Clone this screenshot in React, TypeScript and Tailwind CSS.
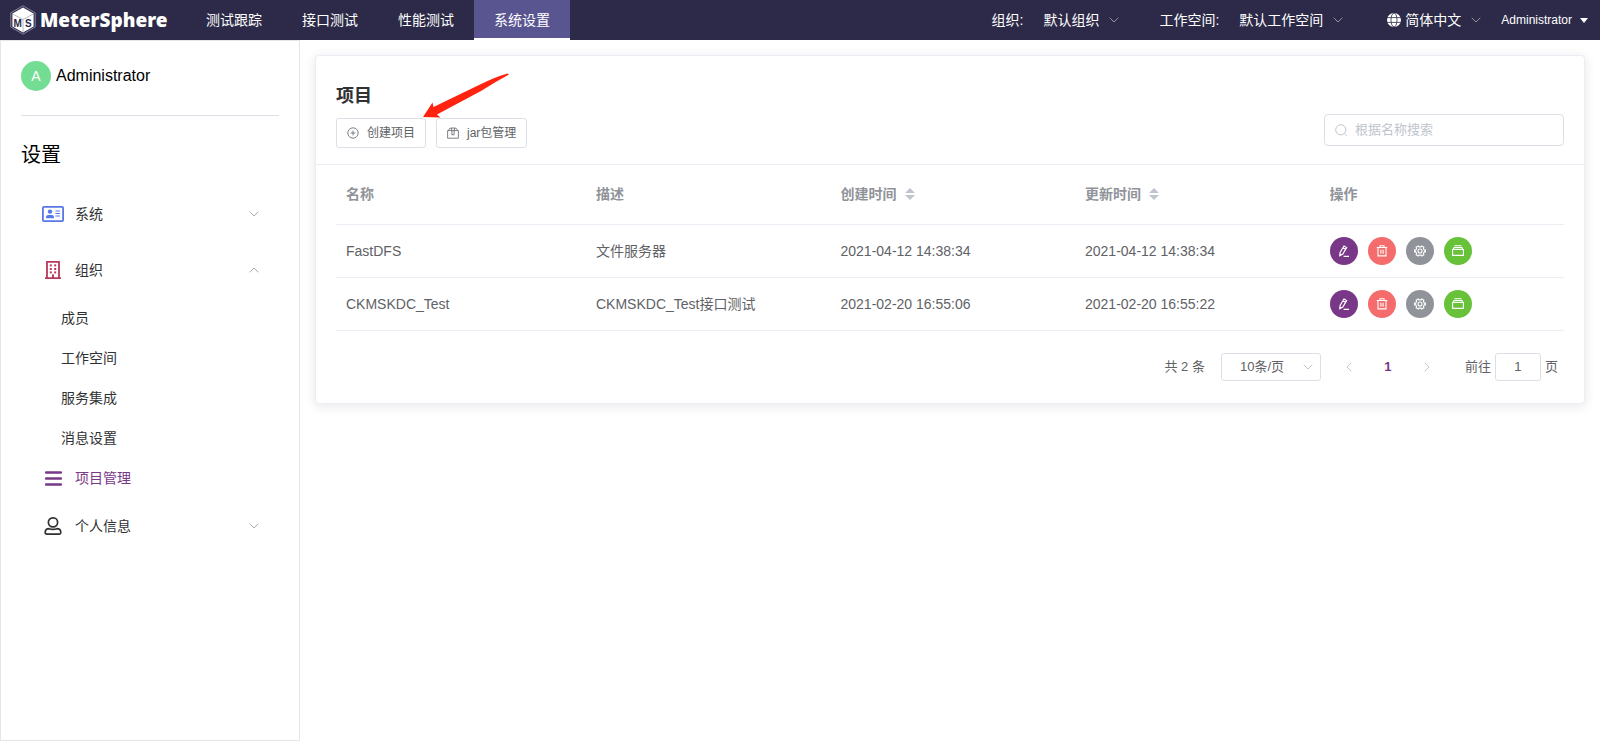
import React, { useState } from "react";

interface Project {
  id: number;
  name: string;
  description: string;
  createTime: string;
  updateTime: string;
}

interface IconProps {
  className?: string;
}

const projects: Project[] = [
  {
    id: 1,
    name: "FastDFS",
    description: "文件服务器",
    createTime: "2021-04-12 14:38:34",
    updateTime: "2021-04-12 14:38:34",
  },
  {
    id: 2,
    name: "CKMSKDC_Test",
    description: "CKMSKDC_Test接口测试",
    createTime: "2021-02-20 16:55:06",
    updateTime: "2021-02-20 16:55:22",
  },
];

const navItems = ["测试跟踪", "接口测试", "性能测试", "系统设置"];
const orgItems = ["成员", "工作空间", "服务集成", "消息设置"];

const Chevron: React.FC<IconProps> = ({ className }) => (
  <svg viewBox="0 0 10 6" className={className} fill="none" stroke="currentColor" aria-hidden="true">
    <path d="M0.7 0.7 L5 5 L9.3 0.7" />
  </svg>
);

const LogoMark = () => (
  <svg viewBox="0 0 26 30" className="h-[30px] w-[26px]" aria-hidden="true">
    <path d="M13 0.8 L25.2 7.8 V22 L13 29.2 L0.8 22 V7.8 Z" fill="none" stroke="#8f8da4" strokeWidth="0.9" />
    <path d="M13 2.4 L23.6 8.4 V21.4 L13 27.6 L2.4 21.4 V8.4 Z" fill="#fff" />
    <path d="M2.4 8.8 L13 14.6 L23.6 8.8 M13 14.6 V27.6" fill="none" stroke="#9b99ae" strokeWidth="0.7" />
    <g fill="#2c2a48" fontFamily="Liberation Sans, sans-serif" fontSize="10" fontWeight="bold">
      <text x="3.4" y="21.6">M</text>
      <text x="15" y="22">S</text>
    </g>
  </svg>
);

const GlobeIcon = () => (
  <svg viewBox="0 0 14 14" className="size-3.5" aria-hidden="true">
    <circle cx="7" cy="7" r="7" fill="#fff" />
    <g fill="none" stroke="#2c2a48" strokeWidth="0.8">
      <ellipse cx="7" cy="7" rx="3" ry="7" />
      <path d="M0 4.6 H14 M0 9.4 H14" />
    </g>
  </svg>
);

const CardIcon = () => (
  <svg viewBox="0 0 22 16" className="h-4 w-[22px] text-[#5878e8]" aria-hidden="true">
    <rect x="0.9" y="0.9" width="20.2" height="14.2" rx="1" fill="none" stroke="currentColor" strokeWidth="1.8" />
    <circle cx="8" cy="5.6" r="2.2" fill="currentColor" />
    <path d="M4 12.2 V11 Q4 8.9 6.2 8.9 H9.8 Q12 8.9 12 11 V12.2 Z" fill="currentColor" />
    <path d="M13.4 5 H18 M13.4 7.5 H18 M13.4 10 H18" stroke="currentColor" strokeWidth="1" />
  </svg>
);

const BuildingIcon = () => (
  <svg viewBox="0 0 16 18" className="h-[18px] w-4 text-[#b8395a]" aria-hidden="true">
    <path d="M2 17 V0.9 H14 V17 M0 17.1 H16" fill="none" stroke="currentColor" strokeWidth="1.8" />
    <g fill="currentColor">
      <rect x="4.8" y="3.4" width="2" height="2" />
      <rect x="9.2" y="3.4" width="2" height="2" />
      <rect x="4.8" y="7" width="2" height="2" />
      <rect x="9.2" y="7" width="2" height="2" />
      <rect x="4.8" y="10.4" width="2" height="2" />
      <rect x="9.2" y="10.4" width="2" height="2" />
      <rect x="7" y="13.4" width="2" height="4" />
    </g>
  </svg>
);

const BarsIcon = () => (
  <svg viewBox="0 0 17 15" className="h-[15px] w-[17px]" aria-hidden="true">
    <path d="M1 1.5 H16 M1 7.5 H16 M1 13.5 H16" stroke="#783887" strokeWidth="2.3" strokeLinecap="round" />
  </svg>
);

const UserIcon = () => (
  <svg viewBox="0 0 18 18" className="size-[18px]" fill="none" stroke="#303133" strokeWidth="1.7" aria-hidden="true">
    <rect x="4.4" y="0.9" width="9.2" height="9" rx="4.3" />
    <path d="M1.2 15.6 Q1.2 11.7 5 11.7 Q9 12.9 13 11.7 Q16.8 11.7 16.8 15.6 Q16.8 17.1 15.4 17.1 H2.6 Q1.2 17.1 1.2 15.6 Z" />
  </svg>
);

const PlusCircleIcon = () => (
  <svg viewBox="0 0 12 12" className="size-3" fill="none" stroke="currentColor" strokeWidth="0.8" aria-hidden="true">
    <circle cx="6" cy="6" r="5.2" />
    <path d="M6 3.6 V8.4 M3.6 6 H8.4" />
  </svg>
);

const BoxIcon = () => (
  <svg viewBox="0 0 12 12" className="size-3" fill="none" stroke="currentColor" strokeWidth="0.8" aria-hidden="true">
    <path d="M0.6 3.6 H11.4 V11.2 H0.6 Z M1.4 3.6 Q2.2 1 4 1 H8 Q9.8 1 10.6 3.6 M4.6 1 V3.6 M7.4 1 V3.6 M4.9 3.6 V7.8 H7.1 V3.6" />
  </svg>
);

const SearchIcon = () => (
  <svg viewBox="0 0 12 12" className="size-3" fill="none" stroke="#c0c4cc" strokeWidth="1" aria-hidden="true">
    <circle cx="5.8" cy="5.8" r="5.1" />
    <path d="M9.4 9.4 L11.6 11.6" />
  </svg>
);

const EditIcon = () => (
  <svg viewBox="0 0 12 12" className="size-3" fill="none" stroke="currentColor" strokeWidth="1.2" aria-hidden="true">
    <path d="M6 1 L8.6 2.6 L4.8 9 L1.8 10.6 L2.1 7.5 Z M5 2.8 L7.6 4.4 M5.6 11.3 H11" />
  </svg>
);

const DeleteIcon = () => (
  <svg viewBox="0 0 12 12" className="size-3" fill="none" stroke="currentColor" strokeWidth="1.1" aria-hidden="true">
    <path d="M0.8 2.5 H11.2 M4 2.5 V0.8 H8 V2.5 M2 2.5 V10.9 H10 V2.5 M4.9 4.8 V8.8 M7.1 4.8 V8.8" />
  </svg>
);

const SettingIcon = () => (
  <svg viewBox="0 0 12 12" className="size-3" fill="none" stroke="currentColor" strokeWidth="1.1" aria-hidden="true">
    <path d="M4.2 0.9 L4.9 1.9 H7.1 L7.8 0.9 L9.9 2.2 L9.4 3.4 L10.3 5.1 H11.4 V6.9 H10.3 L9.4 8.6 L9.9 9.8 L7.8 11.1 L7.1 10.1 H4.9 L4.2 11.1 L2.1 9.8 L2.6 8.6 L1.7 6.9 H0.6 V5.1 H1.7 L2.6 3.4 L2.1 2.2 Z" />
    <circle cx="6" cy="6" r="2" />
  </svg>
);

const FilesIcon = () => (
  <svg viewBox="0 0 12 12" className="size-3" fill="none" stroke="currentColor" strokeWidth="1.1" aria-hidden="true">
    <path d="M0.6 4.5 H11.4 V10.4 H0.6 Z M1.2 4.5 L2 2.6 H10 L10.8 4.5 M2.4 0.8 H9.6" />
  </svg>
);

const rowActions = [
  { label: "编辑", color: "bg-[#783887]", icon: <EditIcon /> },
  { label: "删除", color: "bg-[#f56c6c]", icon: <DeleteIcon /> },
  { label: "设置", color: "bg-[#909399]", icon: <SettingIcon /> },
  { label: "文件", color: "bg-[#67c23a]", icon: <FilesIcon /> },
];

const Header = () => (
  <header className="flex h-10 items-center bg-[#2c2a48] text-sm text-white">
    <a href="#" className="flex w-[186px] shrink-0 items-center gap-1 pl-2.5">
      <LogoMark />
      <span className="font-['Noto_Sans',sans-serif] text-[19px] leading-6 font-black">MeterSphere</span>
    </a>
    <nav className="flex h-full">
      {navItems.map((item) => (
        <a
          key={item}
          href="#"
          className={`flex h-full items-center border-b-2 px-5 pt-0.5 ${
            item === "系统设置" ? "border-white bg-[#595591]" : "border-transparent"
          }`}
        >
          {item}
        </a>
      ))}
    </nav>
    <div className="ml-auto flex items-center pr-3">
      <span className="mr-5">组织:</span>
      <button className="mr-10 flex items-center gap-2.5">
        默认组织
        <Chevron className="h-1.5 w-2.5 text-[#909399]" />
      </button>
      <span className="mr-5">工作空间:</span>
      <button className="mr-11 flex items-center gap-2.5">
        默认工作空间
        <Chevron className="h-1.5 w-2.5 text-[#909399]" />
      </button>
      <button className="mr-5 flex items-center">
        <GlobeIcon />
        <span className="mr-2.5 ml-1">简体中文</span>
        <Chevron className="h-1.5 w-2.5 text-[#909399]" />
      </button>
      <button className="flex items-center gap-2 text-xs">
        Administrator
        <svg viewBox="0 0 8 5" className="h-[5px] w-2" fill="currentColor" aria-hidden="true">
          <path d="M0 0 H8 L4 5 Z" />
        </svg>
      </button>
    </div>
  </header>
);

interface MenuGroupProps {
  icon: React.ReactNode;
  title: string;
  open: boolean;
  onToggle: () => void;
}

const MenuGroup: React.FC<MenuGroupProps> = ({ icon, title, open, onToggle }) => (
  <button
    onClick={onToggle}
    aria-expanded={open}
    className="flex h-14 w-full items-center px-5 text-left"
  >
    <span className="mr-2.5 flex w-6 justify-center">{icon}</span>
    {title}
    <Chevron className={`ml-auto h-1.5 w-2.5 text-[#a6a9ae] ${open ? "rotate-180" : ""}`} />
  </button>
);

const Sidebar = () => {
  const [systemOpen, setSystemOpen] = useState(false);
  const [orgOpen, setOrgOpen] = useState(true);
  const [personalOpen, setPersonalOpen] = useState(false);

  return (
    <aside className="w-[300px] shrink-0 border border-[#e6e6e6] px-5 text-sm text-[#303133]">
      <div className="flex h-[75px] items-start gap-[5px] border-b border-[#dcdfe6] pt-5 text-base text-black">
        <span className="flex size-[30px] items-center justify-center rounded-full bg-[#73de93] text-sm text-white">
          A
        </span>
        <span className="leading-[30px]">Administrator</span>
      </div>
      <h1 className="pt-[23px] pb-[15px] text-xl leading-8 text-black">设置</h1>
      <MenuGroup
        icon={<CardIcon />}
        title="系统"
        open={systemOpen}
        onToggle={() => setSystemOpen(!systemOpen)}
      />
      <MenuGroup
        icon={<BuildingIcon />}
        title="组织"
        open={orgOpen}
        onToggle={() => setOrgOpen(!orgOpen)}
      />
      {orgOpen && (
        <ul>
          {orgItems.map((item) => (
            <li key={item}>
              <a href="#" className="flex h-10 items-center pl-10">
                {item}
              </a>
            </li>
          ))}
        </ul>
      )}
      <a href="#" className="flex h-10 items-center pl-5 text-[#783887]">
        <span className="mr-2.5 flex w-6 justify-center">
          <BarsIcon />
        </span>
        项目管理
      </a>
      <MenuGroup
        icon={<UserIcon />}
        title="个人信息"
        open={personalOpen}
        onToggle={() => setPersonalOpen(!personalOpen)}
      />
    </aside>
  );
};

const SortCaret = () => (
  <svg viewBox="0 0 10 12" className="h-3 w-2.5" fill="#c0c4cc" aria-hidden="true">
    <path d="M0 5 L5 0 L10 5 Z M0 7 H10 L5 12 Z" />
  </svg>
);

const ProjectTable = () => (
  <table className="w-full table-fixed border-collapse text-left text-sm text-[#606266]">
    <thead className="text-[#909399]">
      <tr className="h-[59px] border-b border-[#ebeef5]">
        <th className="w-[250px] px-2.5 font-bold">名称</th>
        <th className="px-2.5 font-bold">描述</th>
        <th className="px-2.5 font-bold">
          <button className="flex items-center gap-2">
            创建时间
            <SortCaret />
          </button>
        </th>
        <th className="px-2.5 font-bold">
          <button className="flex items-center gap-2">
            更新时间
            <SortCaret />
          </button>
        </th>
        <th className="px-2.5 font-bold">操作</th>
      </tr>
    </thead>
    <tbody>
      {projects.map((project) => (
        <tr key={project.id} className="h-[53px] border-b border-[#ebeef5]">
          <td className="px-2.5">{project.name}</td>
          <td className="px-2.5">{project.description}</td>
          <td className="px-2.5">{project.createTime}</td>
          <td className="px-2.5">{project.updateTime}</td>
          <td className="px-2.5">
            <div className="flex gap-2.5">
              {rowActions.map((action) => (
                <button
                  key={action.label}
                  aria-label={action.label}
                  className={`flex size-7 items-center justify-center rounded-full text-white ${action.color}`}
                >
                  {action.icon}
                </button>
              ))}
            </div>
          </td>
        </tr>
      ))}
    </tbody>
  </table>
);

const Pagination = () => {
  const [page, setPage] = useState("1");

  return (
    <div className="flex h-7 items-center justify-end pr-1.5 text-[13px] text-[#606266]">
      <span className="mr-4">共 2 条</span>
      <div className="relative mr-[18px]">
        <select
          aria-label="每页条数"
          className="h-7 w-[100px] appearance-none rounded-[3px] border border-[#dcdfe6] bg-white pr-[18px] text-center"
        >
          <option>10条/页</option>
        </select>
        <Chevron className="pointer-events-none absolute top-[11px] right-2 h-1.5 w-2.5 text-[#c0c4cc]" />
      </div>
      <button aria-label="上一页" className="flex w-5 justify-center text-[#c0c4cc]">
        <Chevron className="h-1.5 w-2.5 rotate-90" />
      </button>
      <button className="mx-2.5 w-[38px] font-bold text-[#783887]">1</button>
      <button aria-label="下一页" className="mr-7 flex w-5 justify-center text-[#c0c4cc]">
        <Chevron className="h-1.5 w-2.5 -rotate-90" />
      </button>
      <label className="flex items-center gap-1">
        前往
        <input
          value={page}
          onChange={(e) => setPage(e.target.value)}
          className="h-7 w-[46px] rounded-[3px] border border-[#dcdfe6] text-center"
        />
        页
      </label>
    </div>
  );
};

const App = () => {
  return (
    <div className="flex min-h-screen flex-col bg-white font-['Liberation_Sans','Noto_Sans_CJK_SC',sans-serif]">
      <Header />
      <div className="flex flex-1 items-stretch">
        <Sidebar />
        <main className="min-w-0 flex-1 p-[15px]">
          <section className="rounded border border-[#ebeef5] bg-white shadow-[0_2px_12px_0_rgba(0,0,0,0.1)]">
            <div className="flex items-end justify-between border-b border-[#ebeef5] px-5 pt-[25px] pb-4">
              <div>
                <h2 className="mb-[7px] text-lg leading-[30px] font-bold text-[#303133]">项目</h2>
                <div className="relative flex gap-2.5 text-xs text-[#606266]">
                  <button className="flex h-[30px] items-center gap-2 rounded-[3px] border border-[#dcdfe6] px-2.5">
                    <PlusCircleIcon />
                    创建项目
                  </button>
                  <button className="flex h-[30px] items-center gap-2 rounded-[3px] border border-[#dcdfe6] px-2.5">
                    <BoxIcon />
                    jar包管理
                  </button>
                  {/* red arrow pointing at the create button */}
                  <svg
                    viewBox="0 0 86 45"
                    className="pointer-events-none absolute bottom-[30px] left-[87px] h-[45px] w-[86px]"
                    aria-hidden="true"
                  >
                    <path
                      d="M0 44 L9.5 29.5 L10.5 34 L56 12 Q72 4 84.5 0.5 L86 1.5 Q72 9 58 18 L14 41.5 L17.5 44.5 Z"
                      fill="#ff2310"
                    />
                  </svg>
                </div>
              </div>
              <label className="mb-0.5 flex h-8 w-60 items-center gap-2 rounded border border-[#dcdfe6] px-2.5 text-[13px]">
                <SearchIcon />
                <input
                  aria-label="搜索"
                  placeholder="根据名称搜索"
                  className="min-w-0 flex-1 outline-none placeholder:text-[#c0c4cc]"
                />
              </label>
            </div>
            <div className="px-5 pb-[22px]">
              <ProjectTable />
              <div className="pt-[22px]">
                <Pagination />
              </div>
            </div>
          </section>
        </main>
      </div>
    </div>
  );
};

export default App;
